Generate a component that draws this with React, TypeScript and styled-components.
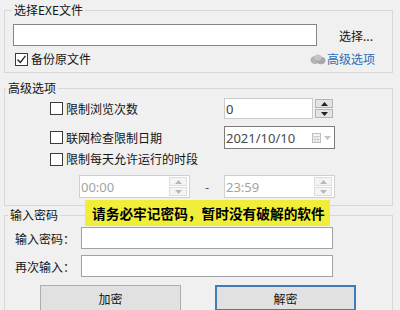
import React from "react";
import styled, { createGlobalStyle } from "styled-components";

const Global = createGlobalStyle`
  html, body { margin: 0; padding: 0; background: #f0f0f0; }
  body {
    font-family: "Noto Sans CJK SC", "Microsoft YaHei", sans-serif;
    font-size: 12px;
    color: #141414;
  }
  * { box-sizing: border-box; }
`;

const Page = styled.div`
  position: relative;
  width: 400px;
  height: 310px;
  overflow: hidden;
  background: #f0f0f0;
  padding: 10px 7px 0 4px;
  display: flex;
  flex-direction: column;
`;

const Group = styled.section<{ $mt: number; $h: number }>`
  flex-shrink: 0;
  margin-top: ${(p) => p.$mt}px;
  height: ${(p) => p.$h}px;
  border: 1px solid #d7d7d7;
  display: flex;
  flex-direction: column;
`;

const Title = styled.div<{ $ml: number }>`
  align-self: flex-start;
  margin: -8px 0 0 ${(p) => p.$ml}px;
  padding: 0 2px;
  height: 14px;
  line-height: 14px;
  background: #f0f0f0;
  white-space: nowrap;
`;

/* ---------- group 1 ---------- */
const PathRow = styled.div`
  display: flex;
  align-items: center;
  margin: 7px 0 0 8px;
  height: 22px;
`;

const PathInput = styled.div`
  width: 304px;
  height: 22px;
  background: #fff;
  border: 1px solid #858585;
`;

const BrowseButton = styled.button`
  margin-left: 6px;
  width: 66px;
  height: 22px;
  border: none;
  background: transparent;
  font: inherit;
  color: #141414;
  padding: 0;
`;

const OptionRow = styled.div`
  display: flex;
  align-items: center;
  justify-content: space-between;
  margin: 6px 17px 0 10px;
  height: 14px;
`;

const CheckLabel = styled.label`
  display: flex;
  align-items: center;
  gap: 3px;
  white-space: nowrap;
  line-height: 14px;
`;

const Box = styled.span`
  width: 13px;
  height: 13px;
  flex-shrink: 0;
  background: #fff;
  border: 1px solid #3a3a3a;
  display: flex;
  align-items: center;
  justify-content: center;
`;

const LinkText = styled.span`
  display: flex;
  align-items: center;
  gap: 1px;
  color: #2d6cb0;
  line-height: 14px;
`;

/* ---------- group 2 ---------- */
const OptGrid = styled.div<{ $mt: number; $h: number }>`
  display: grid;
  grid-template-columns: 174px auto;
  align-items: center;
  margin: ${(p) => p.$mt}px 0 0 45px;
  height: ${(p) => p.$h}px;
`;

const Spin = styled.div`
  display: flex;
  align-items: center;
  gap: 2px;
`;

const Field = styled.div<{ $w: number; $h: number; $border: string; $color?: string }>`
  width: ${(p) => p.$w}px;
  height: ${(p) => p.$h}px;
  background: #fff;
  border: 1px solid ${(p) => p.$border};
  color: ${(p) => p.$color ?? "#3a3a3a"};
  display: flex;
  align-items: center;
  justify-content: space-between;
  padding: 0 3px 0 1px;
  font-family: "Noto Sans", "Noto Sans CJK SC", sans-serif;
  font-size: 13px;
`;

const SpinButtons = styled.div`
  display: flex;
  flex-direction: column;
  gap: 1px;
`;

const SpinButton = styled.div<{ $faint?: boolean }>`
  width: 18px;
  height: 9px;
  background: ${(p) => (p.$faint ? "#f4f4f4" : "#e4e4e4")};
  border: 1px solid ${(p) => (p.$faint ? "#dddddd" : "#b4b4b4")};
  display: flex;
  align-items: center;
  justify-content: center;
`;

const InnerSpin = styled.div`
  display: flex;
  flex-direction: column;
  gap: 1px;
  margin-right: -1px;
`;

const DateIcons = styled.span`
  display: flex;
  align-items: center;
  gap: 3px;
`;

const TimeRow = styled.div`
  display: flex;
  align-items: center;
  margin: 9px 0 0 74px;
  height: 23px;
`;

const Dash = styled.span`
  width: 34px;
  text-align: center;
  color: #444;
`;

/* ---------- group 3 ---------- */
const PwGrid = styled.div<{ $mt: number }>`
  display: grid;
  grid-template-columns: 66px 252px;
  align-items: center;
  margin: ${(p) => p.$mt}px 0 0 10px;
  height: 22px;
`;

const PwInput = styled.div`
  height: 22px;
  background: #fff;
  border: 1px solid #a2a2a2;
`;

const ButtonRow = styled.div`
  display: flex;
  gap: 34px;
  margin: 8px 0 0 35px;
`;

const Btn = styled.button<{ $default?: boolean }>`
  width: 141px;
  height: 26px;
  font: inherit;
  color: #141414;
  background: #e1e1e1;
  border: ${(p) => (p.$default ? "2px solid #3c7fb8" : "1px solid #adadad")};
  padding: 0;
`;

const Banner = styled.div`
  position: absolute;
  left: 85px;
  top: 200px;
  width: 245px;
  height: 26px;
  background: #f1ee3a;
  color: #000;
  font-weight: 700;
  font-size: 13.7px;
  line-height: 26px;
  padding-left: 7px;
  white-space: nowrap;
`;

const Check = () => (
  <svg width="11" height="11" viewBox="0 0 11 11">
    <path d="M1.5 5.5 L4.3 8.5 L9.5 1.8" fill="none" stroke="#222" strokeWidth="1.3" />
  </svg>
);

const CheckBox = ({ checked, children }: { checked?: boolean; children: React.ReactNode }) => (
  <CheckLabel>
    <Box>{checked && <Check />}</Box>
    {children}
  </CheckLabel>
);

const Arrow = ({ up, color }: { up?: boolean; color: string }) => (
  <svg width="7" height="4" viewBox="0 0 7 4">
    <path d={up ? "M0 4 L3.5 0 L7 4 Z" : "M0 0 L3.5 4 L7 0 Z"} fill={color} />
  </svg>
);

const GearIcon = () => (
  <svg width="16" height="12" viewBox="0 0 16 12">
    <ellipse cx="5" cy="7" rx="4.5" ry="4" fill="#b3b3b3" />
    <ellipse cx="11" cy="7.5" rx="4.5" ry="3.8" fill="#a8a8a8" />
    <ellipse cx="8" cy="4.5" rx="3.5" ry="3" fill="#c4c4c4" />
  </svg>
);

const CalendarIcon = () => (
  <svg width="9" height="10" viewBox="0 0 9 10">
    <rect x="0.5" y="0.5" width="8" height="9" fill="#f4f4f4" stroke="#bdbdbd" />
    <path d="M0.5 3.5 H8.5 M0.5 6.5 H8.5 M3.2 3.5 V9.5 M5.8 3.5 V9.5" stroke="#cfcfcf" strokeWidth="1" />
  </svg>
);

const TimeBox = ({ value }: { value: string }) => (
  <Field $w={111} $h={23} $border="#d0d0d0" $color="#a3a3a3">
    {value}
    <InnerSpin>
      <SpinButton $faint>
        <Arrow up color="#b8b8b8" />
      </SpinButton>
      <SpinButton $faint>
        <Arrow color="#b8b8b8" />
      </SpinButton>
    </InnerSpin>
  </Field>
);

export default function App() {
  return (
    <>
      <Global />
      <Page>
        <Group $mt={0} $h={63}>
          <Title $ml={7}>选择EXE文件</Title>
          <PathRow>
            <PathInput />
            <BrowseButton>选择...</BrowseButton>
          </PathRow>
          <OptionRow>
            <CheckBox checked>备份原文件</CheckBox>
            <LinkText>
              <GearIcon />
              高级选项
            </LinkText>
          </OptionRow>
        </Group>

        <Group $mt={15} $h={118}>
          <Title $ml={1}>高级选项</Title>
          <OptGrid $mt={3} $h={21}>
            <CheckBox>限制浏览次数</CheckBox>
            <Spin>
              <Field $w={89} $h={21} $border="#cbcbcb" $color="#3a3a3a">
                0
              </Field>
              <SpinButtons>
                <SpinButton>
                  <Arrow up color="#222" />
                </SpinButton>
                <SpinButton>
                  <Arrow color="#222" />
                </SpinButton>
              </SpinButtons>
            </Spin>
          </OptGrid>
          <OptGrid $mt={7} $h={23}>
            <CheckBox>联网检查限制日期</CheckBox>
            <Field $w={111} $h={23} $border="#7c7c7c" $color="#4a4a4a">
              2021/10/10
              <DateIcons>
                <CalendarIcon />
                <Arrow color="#c4c4c4" />
              </DateIcons>
            </Field>
          </OptGrid>
          <OptGrid $mt={3} $h={14}>
            <CheckBox>限制每天允许运行的时段</CheckBox>
          </OptGrid>
          <TimeRow>
            <TimeBox value="00:00" />
            <Dash>-</Dash>
            <TimeBox value="23:59" />
          </TimeRow>
        </Group>

        <Group $mt={9} $h={120}>
          <Title $ml={3}>输入密码</Title>
          <PwGrid $mt={5}>
            <span>输入密码：</span>
            <PwInput />
          </PwGrid>
          <PwGrid $mt={6}>
            <span>再次输入：</span>
            <PwInput />
          </PwGrid>
          <ButtonRow>
            <Btn>加密</Btn>
            <Btn $default>解密</Btn>
          </ButtonRow>
        </Group>

        <Banner>请务必牢记密码，暂时没有破解的软件</Banner>
      </Page>
    </>
  );
}
